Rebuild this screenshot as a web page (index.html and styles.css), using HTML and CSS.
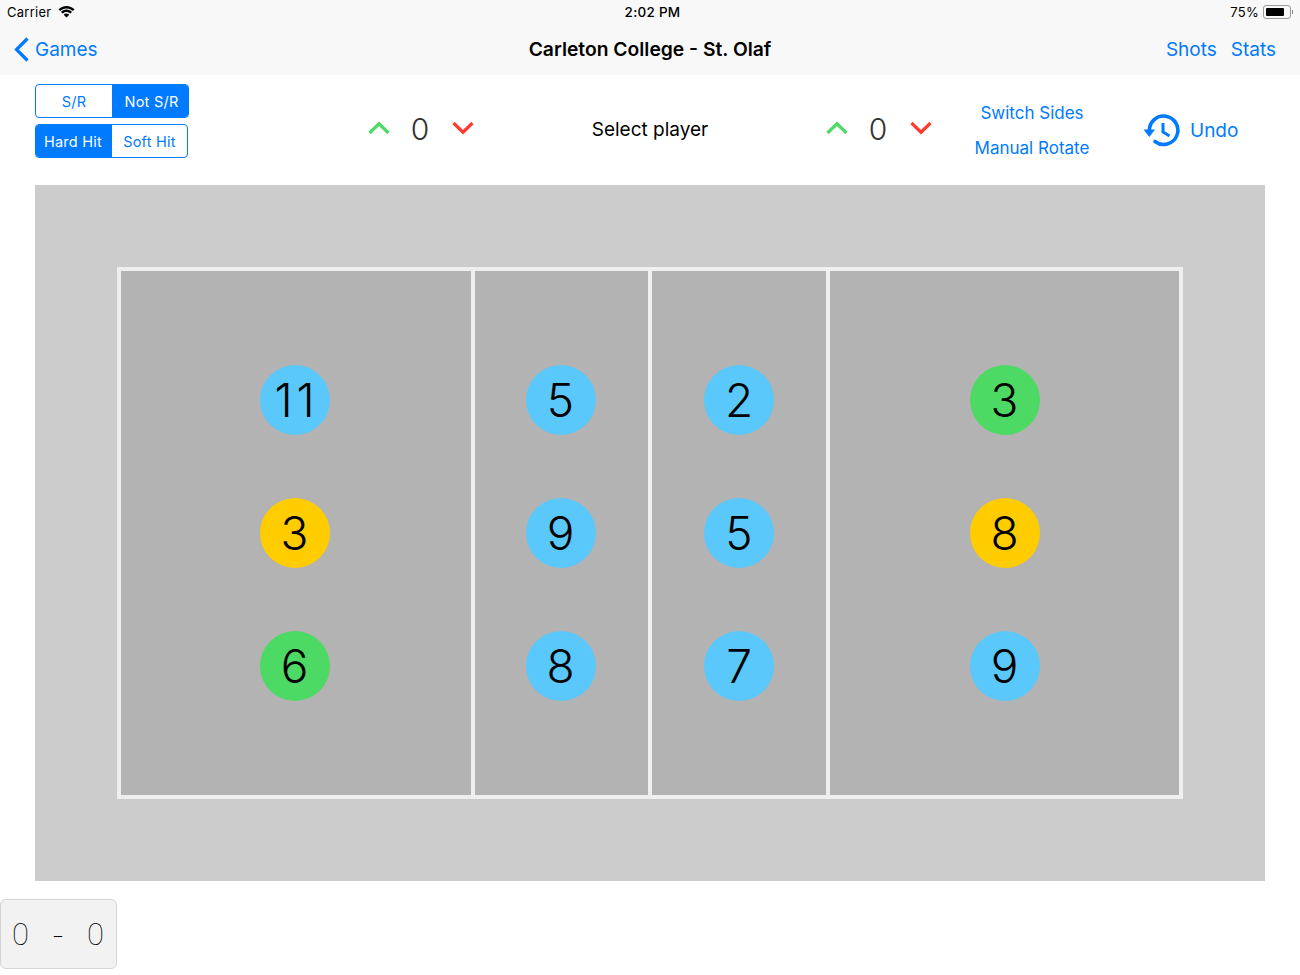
FILE: index.html
```html
<!DOCTYPE html>
<html lang="en">
<head>
<meta charset="utf-8">
<title>Carleton College - St. Olaf</title>
<link rel="stylesheet" href="styles.css">
</head>
<body>
<header class="chrome">
  <div class="status">
    <div class="status-left">
      <span>Carrier</span>
      <svg class="wifi" width="17" height="12" viewBox="0 0 17 12"><path d="M8.500 2.400c2.500 0 4.700 1 6.400 2.500L16.500 3.300C14.400 1.300 11.600 0 8.500 0S2.600 1.300.5 3.300l1.600 1.600c1.700-1.500 3.900-2.500 6.400-2.500z"/><path d="M8.500 6c1.500 0 2.800.6 3.900 1.500l1.600-1.600C12.500 4.500 10.600 3.600 8.500 3.600s-4 .9-5.500 2.300l1.600 1.600C5.700 6.600 7 6 8.500 6z"/><path d="M8.500 7.600c-1.100 0-2.100.4-2.800 1.100l2.800 2.900 2.800-2.900c-.7-.7-1.700-1.100-2.800-1.100z"/></svg>
    </div>
    <div class="status-time">2:02 PM</div>
    <div class="status-right">
      <span>75%</span>
      <span class="battery"><span class="battery-level"></span></span>
      <span class="battery-tip"></span>
    </div>
  </div>
  <nav class="nav">
    <a class="nav-back">
      <svg width="16" height="25" viewBox="0 0 16 25"><path d="M13.500 1.500 2.500 12.500 13.500 23.500" fill="none" stroke="#007aff" stroke-width="3.200"/></svg>
      <span>Games</span>
    </a>
    <div class="nav-title">Carleton College - St. Olaf</div>
    <div class="nav-actions"><a>Shots</a><a>Stats</a></div>
  </nav>
</header>

<section class="toolbar">
  <div class="segments">
    <div class="segment segment-wide">
      <span class="seg-item seg-left">S/R</span>
      <span class="seg-item seg-on">Not S/R</span>
    </div>
    <div class="segment">
      <span class="seg-item seg-on seg-left">Hard Hit</span>
      <span class="seg-item">Soft Hit</span>
    </div>
  </div>

  <div class="counter">
    <svg width="22" height="14" viewBox="0 0 22 14"><path d="M1.500 12 11 2.800 20.500 12" fill="none" stroke="#4cd964" stroke-width="3.200"/></svg>
    <span class="counter-value">0</span>
    <svg width="22" height="14" viewBox="0 0 22 14"><path d="M1.500 2 11 11.200 20.500 2" fill="none" stroke="#ff3b30" stroke-width="3.200"/></svg>
  </div>

  <div class="select-player">Select player</div>

  <div class="counter">
    <svg width="22" height="14" viewBox="0 0 22 14"><path d="M1.500 12 11 2.800 20.500 12" fill="none" stroke="#4cd964" stroke-width="3.200"/></svg>
    <span class="counter-value">0</span>
    <svg width="22" height="14" viewBox="0 0 22 14"><path d="M1.500 2 11 11.200 20.500 2" fill="none" stroke="#ff3b30" stroke-width="3.200"/></svg>
  </div>

  <div class="side-actions">
    <a>Switch Sides</a>
    <a>Manual Rotate</a>
  </div>

  <a class="undo">
    <svg width="38" height="33" viewBox="0 0 38 33"><path d="M6.500 17.500A14.200 14.200 0 1 1 12 27.500" fill="none" stroke="#007aff" stroke-width="3.600" stroke-linecap="round"/><path d="M0.500 15.500H12L6.300 23z" fill="#007aff"/><path d="M20 9v9l6.500 4" fill="none" stroke="#007aff" stroke-width="3"/></svg>
    <span>Undo</span>
  </a>
</section>

<main class="floor">
  <div class="court">
    <div class="zone zone-a">
      <span class="player blue player-double">11</span>
      <span class="player yellow">3</span>
      <span class="player green">6</span>
    </div>
    <div class="zone zone-b">
      <span class="player blue">5</span>
      <span class="player blue">9</span>
      <span class="player blue">8</span>
    </div>
    <div class="zone">
      <span class="player blue">2</span>
      <span class="player blue">5</span>
      <span class="player blue">7</span>
    </div>
    <div class="zone">
      <span class="player green">3</span>
      <span class="player yellow">8</span>
      <span class="player blue">9</span>
    </div>
  </div>
</main>

<footer class="score">
  <span>0</span>
  <span class="score-dash">-</span>
  <span>0</span>
</footer>
</body>
</html>
```

FILE: styles.css
```css
* {
  box-sizing: border-box;
}

html,
body {
  margin: 0;
  height: 975px;
  overflow: hidden;
  background: #fff;
  font-family: Inter, "Liberation Sans", sans-serif;
  color: #000;
}

.chrome {
  height: 75px;
  background: #f8f8f8;
}

.status {
  height: 24px;
  padding: 0 7px;
  display: grid;
  grid-template-columns: 1fr auto 1fr;
  align-items: center;
  font-size: 13px;
  letter-spacing: 0.25px;
}

.status-left {
  display: flex;
  align-items: center;
  gap: 7px;
}

.status-time {
  font-size: 13.500px;
  font-weight: 500;
  padding-left: 5px;
}

.status-right {
  display: flex;
  justify-content: flex-end;
  align-items: center;
}

.battery {
  width: 28px;
  height: 14px;
  margin-left: 4px;
  padding: 2px;
  border: 1px solid #999;
  border-radius: 3px;
}

.battery-level {
  display: block;
  width: 18px;
  height: 100%;
  background: #000;
  border-radius: 1px;
}

.battery-tip {
  width: 1px;
  height: 4px;
  margin-left: 1px;
  background: #888;
}

.nav {
  height: 51px;
  padding: 0 24px 0 14px;
  display: grid;
  grid-template-columns: 1fr auto 1fr;
  align-items: center;
  font-size: 19px;
  color: #007aff;
}

.nav-back {
  display: flex;
  align-items: center;
  gap: 5px;
}

.nav-title {
  color: #000;
  font-weight: 600;
  font-size: 19.300px;
  padding: 0 0 2px 10px;
}

.nav-actions {
  display: flex;
  justify-content: flex-end;
  gap: 14px;
}

.toolbar {
  height: 110px;
  padding-left: 35px;
  display: grid;
  grid-template-columns: 333px 106px 352px 106px 200px 1fr;
  align-items: center;
  color: #007aff;
}

.segments {
  align-self: start;
  padding-top: 9px;
  display: flex;
  flex-direction: column;
  gap: 6px;
}

.segment {
  width: 153px;
  height: 34px;
  display: grid;
  grid-template-columns: 76px 1fr;
  border: 1px solid #007aff;
  border-radius: 4px;
  overflow: hidden;
  font-size: 14.500px;
  letter-spacing: 0.25px;
}

.segment-wide {
  width: 154px;
}

.segment-wide .seg-on {
  padding-left: 3px;
}

.seg-item {
  display: flex;
  align-items: center;
  justify-content: center;
}

.seg-on {
  background: #007aff;
  color: #fff;
}

.seg-on.seg-left {
  padding-right: 2px;
}

.counter {
  display: flex;
  align-items: center;
  justify-content: space-between;
  padding-bottom: 4px;
}

.counter-value {
  padding: 2px 2px 0 0;
  font-size: 30px;
  font-weight: 300;
  color: #333;
}

.select-player {
  text-align: center;
  color: #000;
  font-size: 19px;
  padding-bottom: 2px;
}

.side-actions {
  display: flex;
  flex-direction: column;
  align-items: center;
  gap: 15px;
  padding-top: 1px;
  font-size: 17px;
}

.undo {
  display: flex;
  align-items: center;
  gap: 9px;
  padding-left: 11px;
  font-size: 19px;
}

.floor {
  width: 1230px;
  height: 696px;
  margin: 0 35px;
  padding: 82px;
  background: #ccc;
}

.court {
  height: 532px;
  padding: 4px;
  display: grid;
  grid-template-columns: 350px 173px 174px 349px;
  gap: 4px;
  background: #efefef;
}

.zone {
  display: flex;
  flex-direction: column;
  align-items: center;
  justify-content: center;
  gap: 63px;
  background: #b3b3b3;
}

.zone-a {
  padding-right: 3px;
}

.zone-b {
  padding-right: 2px;
}

.player {
  width: 70px;
  height: 70px;
  display: flex;
  align-items: center;
  justify-content: center;
  border-radius: 50%;
  font-size: 46px;
  font-weight: 300;
}

.player-double {
  padding-left: 4px;
  letter-spacing: 4px;
}

.blue {
  background: #5ac8fa;
}

.yellow {
  background: #ffcc00;
}

.green {
  background: #4cd964;
}

.score {
  width: 117px;
  height: 70px;
  margin-top: 18px;
  padding: 0 12px 0 11px;
  display: flex;
  align-items: center;
  justify-content: space-between;
  background: #f2f2f2;
  border: 1px solid #d4d4d4;
  border-radius: 6px;
  font-size: 31px;
  font-weight: 100;
  font-family: Roboto, Inter, sans-serif;
  color: #000;
}

.score-dash {
  padding-top: 5px;
  font-size: 36px;
  line-height: 1;
}
```
